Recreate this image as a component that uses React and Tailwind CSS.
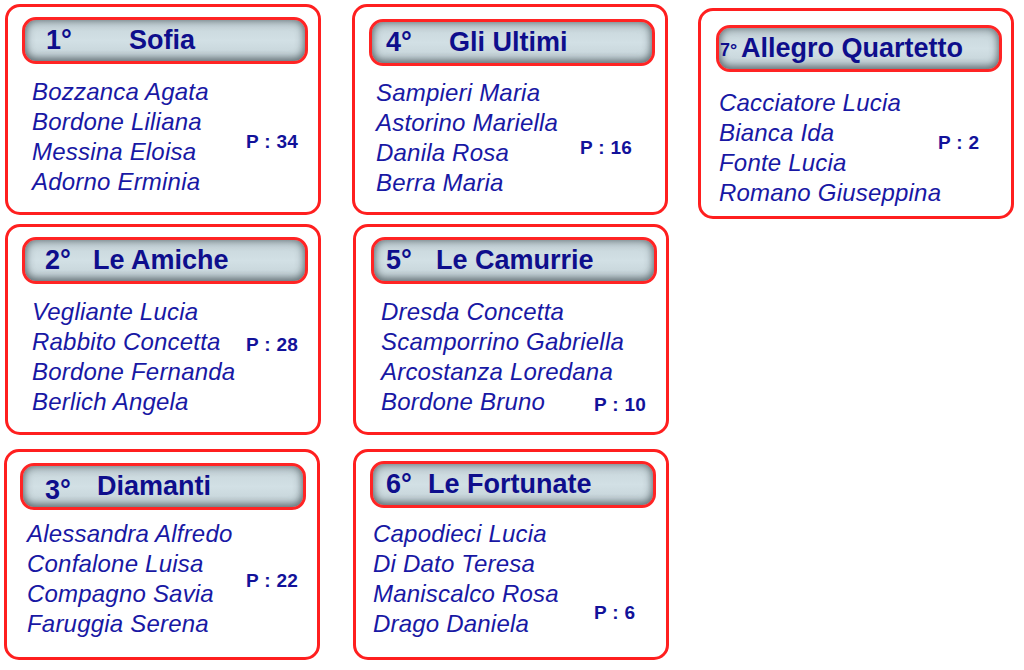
const cards = [
  [
    {
      num: "1°", name: "Sofia", numPl: "pl-[21px]", numW: "w-[83px]", numCls: "text-[27px]",
      hTop: "mt-[10px]", hLeft: "ml-[14px]", namesMt: "mt-[13px]", namesPl: "pl-[24px]", namesW: "w-[214px]", pMt: "mt-[53px]",
      names: ["Bozzanca Agata", "Bordone Liliana", "Messina Eloisa", "Adorno Erminia"], p: "P : 34",
    },
    {
      num: "2°", name: "Le Amiche", numPl: "pl-[20px]", numW: "w-[48px]", numCls: "text-[27px]",
      hTop: "mt-[10px]", hLeft: "ml-[14px]", namesMt: "mt-[13px]", namesPl: "pl-[24px]", namesW: "w-[214px]", pMt: "mt-[36px]",
      names: ["Vegliante Lucia", "Rabbito Concetta", "Bordone Fernanda", "Berlich Angela"], p: "P : 28",
    },
    {
      num: "3°", name: "Diamanti", numPl: "pl-[22px]", numW: "w-[52px]", numCls: "text-[27px] pt-[7px]",
      hTop: "mt-[11px]", hLeft: "ml-[13px]", namesMt: "mt-[9px]", namesPl: "pl-[20px]", namesW: "w-[219px]", pMt: "mt-[50px]",
      names: ["Alessandra Alfredo", "Confalone Luisa", "Compagno Savia", "Faruggia Serena"], p: "P : 22",
    },
  ],
  [
    {
      num: "4°", name: "Gli Ultimi", numPl: "pl-[14px]", numW: "w-[63px]", numCls: "text-[27px]",
      hTop: "mt-[12px]", hLeft: "ml-[14px]", namesMt: "mt-[12px]", namesPl: "pl-[21px]", namesW: "w-[204px]", pMt: "mt-[58px]",
      names: ["Sampieri Maria", "Astorino Mariella", "Danila Rosa", "Berra Maria"], p: "P : 16",
    },
    {
      num: "5°", name: "Le Camurrie", numPl: "pl-[12px]", numW: "w-[50px]", numCls: "text-[27px]",
      hTop: "mt-[10px]", hLeft: "ml-[15px]", namesMt: "mt-[13px]", namesPl: "pl-[25px]", namesW: "w-[213px]", pMt: "mt-[96px]",
      names: ["Dresda Concetta", "Scamporrino Gabriella", "Arcostanza Loredana", "Bordone Bruno"], p: "P : 10",
    },
    {
      num: "6°", name: "Le Fortunate", numPl: "pl-[13px]", numW: "w-[42px]", numCls: "text-[27px]",
      hTop: "mt-[9px]", hLeft: "ml-[14px]", namesMt: "mt-[11px]", namesPl: "pl-[17px]", namesW: "w-[221px]", pMt: "mt-[82px]",
      names: ["Capodieci Lucia", "Di Dato Teresa", "Maniscalco Rosa", "Drago Daniela"], p: "P : 6",
    },
  ],
  [
    {
      num: "7°", name: "Allegro Quartetto", numPl: "pl-[1px]", numW: "w-[21px]", numCls: "text-[18px] pt-[3px]",
      hTop: "mt-[14px]", hLeft: "ml-[15px]", namesMt: "mt-[16px]", namesPl: "pl-[18px]", namesW: "w-[219px]", pMt: "mt-[43px]",
      names: ["Cacciatore Lucia", "Bianca Ida", "Fonte Lucia", "Romano Giuseppina"], p: "P : 2",
    },
  ],
];

function Card({ c, extra }) {
  return (
    <div className={`box-border w-[316px] h-[211px] rounded-[15px] border-[3px] border-[#ff1f1f] bg-white flex flex-col ${extra}`}>
      <div
        className={`box-border ${c.hTop} ${c.hLeft} w-[286px] h-[47px] rounded-[14px] border-[3px] border-[#ff2424] bg-gradient-to-b from-[#c6d4d9] via-[#d2e0e5] to-[#c2d0d5] shadow-[inset_0_0_10px_rgba(60,72,78,0.8),inset_0_-4px_6px_rgba(60,72,78,0.3)] flex items-center ${c.numPl} text-[#0e0e8c] font-bold`}
      >
        <span className={`${c.numW} flex-none ${c.numCls} leading-none`}>{c.num}</span>
        <span className="text-[27px] leading-none whitespace-nowrap">{c.name}</span>
      </div>
      <div className={`flex ${c.namesMt} ${c.namesPl}`}>
        <div className={`${c.namesW} flex-none flex flex-col italic text-[24px] leading-[30px] tracking-[0.2px] text-[#1818a4] whitespace-nowrap`}>
          {c.names.map((n) => (
            <span key={n}>{n}</span>
          ))}
        </div>
        <div className={`${c.pMt} text-[19px] leading-[24px] font-bold tracking-[0.3px] text-[#12129a] whitespace-nowrap`}>{c.p}</div>
      </div>
    </div>
  );
}

export default function App() {
  return (
    <div
      className="w-[1024px] h-[670px] bg-white flex items-start pl-[5px] pt-[4px] overflow-hidden"
      style={{ fontFamily: '"Liberation Sans", Arial, Helvetica, sans-serif' }}
    >
      <div className="flex flex-col flex-none">
        <Card c={cards[0][0]} extra="" />
        <Card c={cards[0][1]} extra="mt-[9px]" />
        <Card c={cards[0][2]} extra="mt-[14px] -ml-px" />
      </div>
      <div className="flex flex-col flex-none ml-[31px]">
        <Card c={cards[1][0]} extra="" />
        <Card c={cards[1][1]} extra="mt-[9px] ml-px" />
        <Card c={cards[1][2]} extra="mt-[14px] ml-px" />
      </div>
      <div className="flex flex-col flex-none ml-[29px] mt-[4px]">
        <Card c={cards[2][0]} extra="" />
      </div>
    </div>
  );
}
